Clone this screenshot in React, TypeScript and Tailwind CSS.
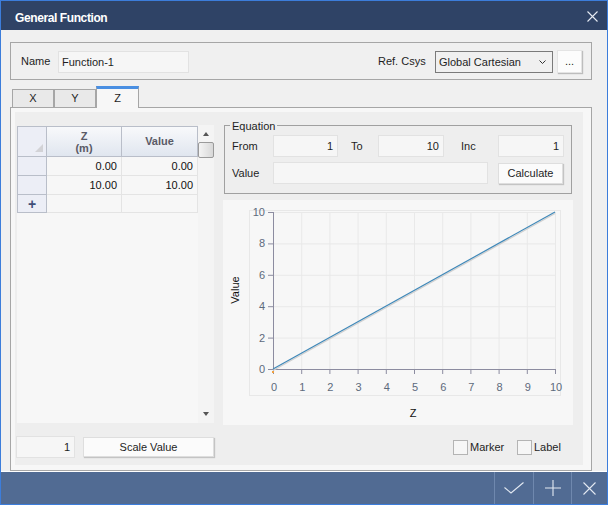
import React from 'react';

const xs = [0, 1, 2, 3, 4, 5, 6, 7, 8, 9, 10];
const ys = [0, 2, 4, 6, 8, 10];

// plot box inside the chart panel
const X0 = 50;
const X1 = 332;
const Y0 = 169;
const Y1 = 12;
const px = (v: number) => X0 + ((X1 - X0) * v) / 10;
const py = (v: number) => Y0 - ((Y0 - Y1) * v) / 10;

function Chart() {
  return (
    <svg width="350" height="225" className="block">
      <rect x="26.5" y="10.5" width="311" height="185" fill="none" stroke="#e8e8e8" />
      {xs.map((v) => (
        <line key={'gx' + v} x1={px(v) + 0.5} x2={px(v) + 0.5} y1={Y1} y2={Y0} stroke="#e9e9e9" />
      ))}
      {ys.map((v) => (
        <line key={'gy' + v} x1={X0} x2={X1} y1={py(v) + 0.5} y2={py(v) + 0.5} stroke="#e9e9e9" />
      ))}
      <line x1={X0 + 0.5} x2={X0 + 0.5} y1={Y1} y2={Y0 + 0.5} stroke="#8c8ca0" />
      <line x1={X0} x2={X1 + 1} y1={Y0 + 0.5} y2={Y0 + 0.5} stroke="#8c8ca0" />
      {ys.map((v) => (
        <g key={'ty' + v}>
          <line x1={X0 - 5} x2={X0} y1={py(v) + 0.5} y2={py(v) + 0.5} stroke="#8c8ca0" />
          <text x={42} y={py(v) + 4} textAnchor="end" fontSize="11" fill="#5d6a7c">
            {v}
          </text>
        </g>
      ))}
      {xs.map((v) => (
        <g key={'tx' + v}>
          <line x1={px(v) + 0.5} x2={px(v) + 0.5} y1={Y0} y2={Y0 + 5} stroke="#8c8ca0" />
          <text x={px(v) + 1} y={191} textAnchor="middle" fontSize="11" fill="#5d6a7c">
            {v}
          </text>
        </g>
      ))}
      <line x1={px(0)} y1={py(0) + 1.5} x2={px(10)} y2={py(10) + 1.5} stroke="#cfcfcf" strokeWidth="1.2" />
      <line x1={px(0)} y1={py(0)} x2={px(10)} y2={py(10)} stroke="#3f88b8" strokeWidth="1.2" />
      <rect x={X0 - 1} y={Y0 + 2} width="2" height="2" fill="#f0a040" />
      <text x="16" y="90" transform="rotate(-90 16 90)" textAnchor="middle" fontSize="11" fill="#111">
        Value
      </text>
      <text x="190" y="217" textAnchor="middle" fontSize="11" fill="#111">
        Z
      </text>
    </svg>
  );
}

function TextBox({ value, className }: { value: string; className: string }) {
  return (
    <div className={`flex items-center justify-end pr-[4px] bg-[#f6f6f6] border border-[#e2e2e2] ${className}`}>
      {value}
    </div>
  );
}

function Checkbox({ label }: { label: string }) {
  return (
    <div className="flex items-center">
      <div className="w-[15px] h-[15px] border border-[#b4b4b4] bg-[#f6f6f6]" />
      <span className="ml-[2px]">{label}</span>
    </div>
  );
}

function Grid() {
  const rows = [
    ['0.00', '0.00'],
    ['10.00', '10.00'],
  ];
  return (
    <div className="flex w-[197px] h-[298px]">
      <div className="w-[181px] mt-[1px] bg-[#f7f7f7] flex flex-col">
        <div className="flex h-[31px]">
          <div className="relative w-[30px] bg-[#eceef6] border border-[#b9bec9]">
            <div className="absolute right-[3px] bottom-[4px] w-0 h-0 border-l-[8px] border-l-transparent border-b-[8px] border-b-[#d2d2d6]" />
          </div>
          <div className="w-[75px] flex flex-col items-center justify-center leading-[12px] font-bold text-[#5a5a66] bg-gradient-to-b from-[#f8f9fb] to-[#e0e6ef] border-t border-b border-r border-[#b9bec9]">
            <span>Z</span>
            <span>(m)</span>
          </div>
          <div className="w-[76px] flex items-center justify-center font-bold text-[#5a5a66] bg-gradient-to-b from-[#f8f9fb] to-[#e0e6ef] border-t border-b border-r border-[#b9bec9]">
            Value
          </div>
        </div>
        {rows.map((r, i) => (
          <div key={i} className="flex h-[19px]">
            <div className="w-[30px] bg-[#eceef6] border-l border-r border-b border-[#b9bec9]" />
            <div className="w-[75px] flex items-center justify-end pr-[4px] border-r border-b border-[#e4e4e4] text-[#111]">
              {r[0]}
            </div>
            <div className="w-[76px] flex items-center justify-end pr-[4px] border-r border-b border-[#e4e4e4] text-[#111]">
              {r[1]}
            </div>
          </div>
        ))}
        <div className="flex h-[18px]">
          <div className="w-[30px] flex items-center justify-center bg-[#eceef6] border-l border-r border-b border-[#b9bec9] text-[#3f4f78] font-bold text-[14px] leading-none">
            +
          </div>
          <div className="w-[75px] border-r border-b border-[#e4e4e4]" />
          <div className="w-[76px] border-r border-b border-[#e4e4e4]" />
        </div>
      </div>
      <div className="w-[16px] bg-[#f4f4f4] flex flex-col items-center">
        <div className="mt-[7px] w-0 h-0 border-l-[3px] border-r-[3px] border-l-transparent border-r-transparent border-b-[4px] border-b-[#555]" />
        <div className="mt-[6px] w-[16px] h-[16px] rounded-[2px] border border-[#9a9a9a] bg-gradient-to-r from-[#f4f4f4] to-[#d8d8d8]" />
        <div className="mt-auto mb-[7px] w-0 h-0 border-l-[3px] border-r-[3px] border-l-transparent border-r-transparent border-t-[4px] border-t-[#555]" />
      </div>
    </div>
  );
}

export default function App() {
  return (
    <div className="w-[608px] h-[505px] border border-[#3c7ddb] flex flex-col font-['Liberation_Sans',Arial,sans-serif] text-[11px] text-[#1e1e1e]">
      {/* title bar */}
      <div className="h-[29px] bg-[#2f4366] flex items-start justify-between pl-[14px] pr-[9px]">
        <span className="mt-[10px] leading-[14px] text-white font-bold text-[12px] tracking-[-0.4px]">General Function</span>
        <svg width="11" height="11" viewBox="0 0 11 11" className="mt-[10px]">
          <path d="M0.5 0.5 L10.5 10.5 M10.5 0.5 L0.5 10.5" stroke="#e6ebf3" strokeWidth="1.1" />
        </svg>
      </div>

      {/* body */}
      <div className="flex-1 bg-[#f0f0f0] pl-[9px] pt-[12px] flex flex-col">
        <div className="w-[582px] h-[38px] border border-[#a6a6a6] flex items-center pr-[9px]">
          <span className="w-[47px] pl-[10px]">Name</span>
          <div className="w-[131px] h-[22px] mt-[2px] flex items-center pl-[3px] bg-[#f6f6f6] border border-[#e2e2e2]">
            Function-1
          </div>
          <span className="ml-auto w-[57px]">Ref. Csys</span>
          <div className="w-[118px] h-[22px] mt-[2px] flex items-center justify-between pl-[3px] pr-[6px] border border-[#7a7a7a] bg-[#f0f0f0]">
            <span>Global Cartesian</span>
            <svg width="7" height="4" viewBox="0 0 7 4">
              <path d="M0.5 0.5 L3.5 3.5 L6.5 0.5" fill="none" stroke="#333" />
            </svg>
          </div>
          <div className="ml-[4px] w-[25px] h-[23px] flex items-center justify-center bg-[#fcfcfc] border border-[#e4e4e4] shadow-[1px_1px_1px_#bdbdbd]">
            ...
          </div>
        </div>

        {/* tabs */}
        <div className="mt-[6px] h-[21px] flex items-end pl-[2px]">
          <div className="w-[42px] h-[18px] flex items-center justify-center bg-[#e9e9e9] border border-b-0 border-[#a6a6a6]">X</div>
          <div className="w-[42px] h-[18px] flex items-center justify-center bg-[#e9e9e9] border border-b-0 border-[#a6a6a6]">Y</div>
          <div className="relative z-10 w-[43px] h-[22px] -mb-px flex items-center justify-center bg-[#f7f7f7] border-x border-[#a6a6a6] border-t-[3px] border-t-[#4a8fe2]">
            Z
          </div>
        </div>

        <div className="w-[582px] h-[364px] border border-[#a6a6a6] bg-[#f7f7f7] pt-[4px] pl-[4px] pr-[8px] pb-[5px]">
          <div className="h-full bg-[#eeeeee] flex flex-col">
            <div className="flex pt-[13px]">
              <div className="ml-[2px]">
                <Grid />
              </div>
              <div className="ml-[9px] w-[350px] flex flex-col">
                <div className="relative ml-[1px] w-[348px] h-[69px] border border-[#a0a0a0] pl-[7px] pt-[9px]">
                  <span className="absolute left-[5px] top-[-8px] px-[2px] bg-[#eeeeee]">Equation</span>
                  <div className="flex items-center">
                    <span className="w-[41px]">From</span>
                    <TextBox value="1" className="w-[65px] h-[22px]" />
                    <span className="ml-[13px] w-[27px]">To</span>
                    <TextBox value="10" className="w-[66px] h-[22px]" />
                    <span className="ml-[17px] w-[37px]">Inc</span>
                    <TextBox value="1" className="w-[66px] h-[22px]" />
                  </div>
                  <div className="flex items-center mt-[5px]">
                    <span className="w-[41px]">Value</span>
                    <TextBox value="" className="w-[215px] h-[22px]" />
                    <div className="ml-[10px] w-[65px] h-[21px] flex items-center justify-center bg-[#fbfbfb] border border-[#dedede] shadow-[1px_1px_1px_#c4c4c4]">
                      Calculate
                    </div>
                  </div>
                </div>
                <div className="mt-[6px] h-[225px] bg-[#f7f7f7]">
                  <Chart />
                </div>
              </div>
            </div>

            <div className="mt-[11px] flex items-center pl-[1px]">
              <TextBox value="1" className="w-[59px] h-[22px]" />
              <div className="ml-[8px] w-[131px] h-[20px] flex items-center justify-center bg-[#fbfbfb] border border-[#dedede] shadow-[1px_1px_1px_#c4c4c4]">
                Scale Value
              </div>
              <div className="ml-[239px] w-[64px]">
                <Checkbox label="Marker" />
              </div>
              <Checkbox label="Label" />
            </div>
          </div>
        </div>
      </div>

      {/* footer */}
      <div className="h-[32px] mt-[1px] bg-[#516b93] flex justify-end">
        <div className="w-[39px] border-l border-[#6f88ae] flex items-center justify-center">
          <svg width="20" height="12" viewBox="0 0 20 12">
            <path d="M0.5 5.5 L7 11 L19.5 0.5" fill="none" stroke="#e3e9f2" strokeWidth="1.1" />
          </svg>
        </div>
        <div className="w-[38px] border-l border-[#6f88ae] flex items-center justify-center">
          <svg width="16" height="16" viewBox="0 0 16 16">
            <path d="M8 0 V16 M0 8 H16" fill="none" stroke="#e3e9f2" strokeWidth="1.1" />
          </svg>
        </div>
        <div className="w-[36px] border-l border-[#6f88ae] flex items-center justify-center">
          <svg width="13" height="13" viewBox="0 0 13 13">
            <path d="M0.5 0.5 L12.5 12.5 M12.5 0.5 L0.5 12.5" fill="none" stroke="#e3e9f2" strokeWidth="1.1" />
          </svg>
        </div>
      </div>
    </div>
  );
}
